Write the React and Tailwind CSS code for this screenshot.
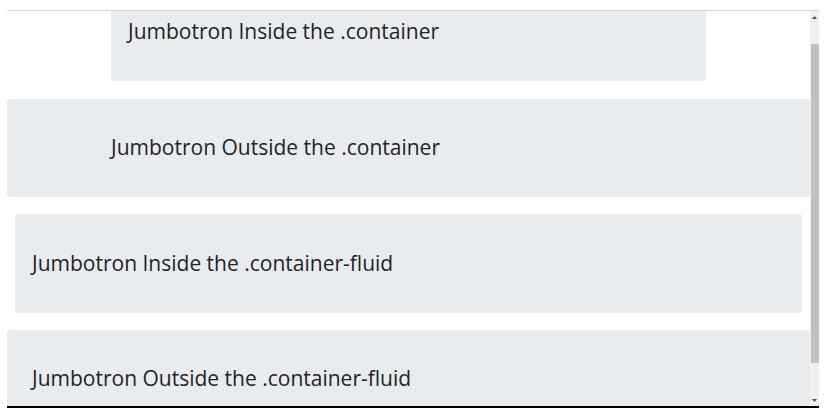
export default function App() {
  const font = { fontFamily: '"Open Sans", "Noto Sans", sans-serif' };

  return (
    <div className="w-[838px] h-[418px] bg-white pt-[10px] pl-[7px]" style={font}>
      <div className="w-[812px] h-[398px] border-t border-[#d6d6d6] border-b-2 border-b-black flex overflow-hidden">
        <div className="w-[803px] h-[395px] overflow-hidden text-[#212529]">
          <div className="-mt-[28px] flex flex-col">
            <div className="px-[104px]">
              <div className="bg-[#e9ecef] rounded-[3px] h-[98px] px-[17px] flex items-center text-[21px] font-medium">
                Jumbotron Inside the .container
              </div>
            </div>

            <div className="mt-[18px] bg-[#e9ecef] rounded-[3px] h-[98px] flex items-center">
              <div className="px-[104px] text-[21px] font-medium">
                Jumbotron Outside the .container
              </div>
            </div>

            <div className="mt-[17px] px-[8px]">
              <div className="bg-[#e9ecef] rounded-[3px] h-[99px] px-[17px] flex items-center text-[21px] font-medium">
                Jumbotron Inside the .container-fluid
              </div>
            </div>

            <div className="mt-[17px] bg-[#e9ecef] rounded-[3px] h-[98px] flex items-center">
              <div className="px-[25px] text-[21px] font-medium">
                Jumbotron Outside the .container-fluid
              </div>
            </div>
          </div>
        </div>

        <div className="w-[9px] h-[395px] bg-[#f0f0f0] flex flex-col items-center">
          <div className="h-[33px] flex items-start pt-[5px]">
            <svg width="5" height="3" viewBox="0 0 5 3">
              <path d="M0 3 L2.5 0 L5 3 Z" fill="#505050" />
            </svg>
          </div>
          <div className="w-[8px] h-[319px] bg-[#c1c1c1]" />
          <div className="flex-1 flex items-end pb-[4px]">
            <svg width="5" height="3" viewBox="0 0 5 3">
              <path d="M0 0 L2.5 3 L5 0 Z" fill="#505050" />
            </svg>
          </div>
        </div>
      </div>
    </div>
  );
}
